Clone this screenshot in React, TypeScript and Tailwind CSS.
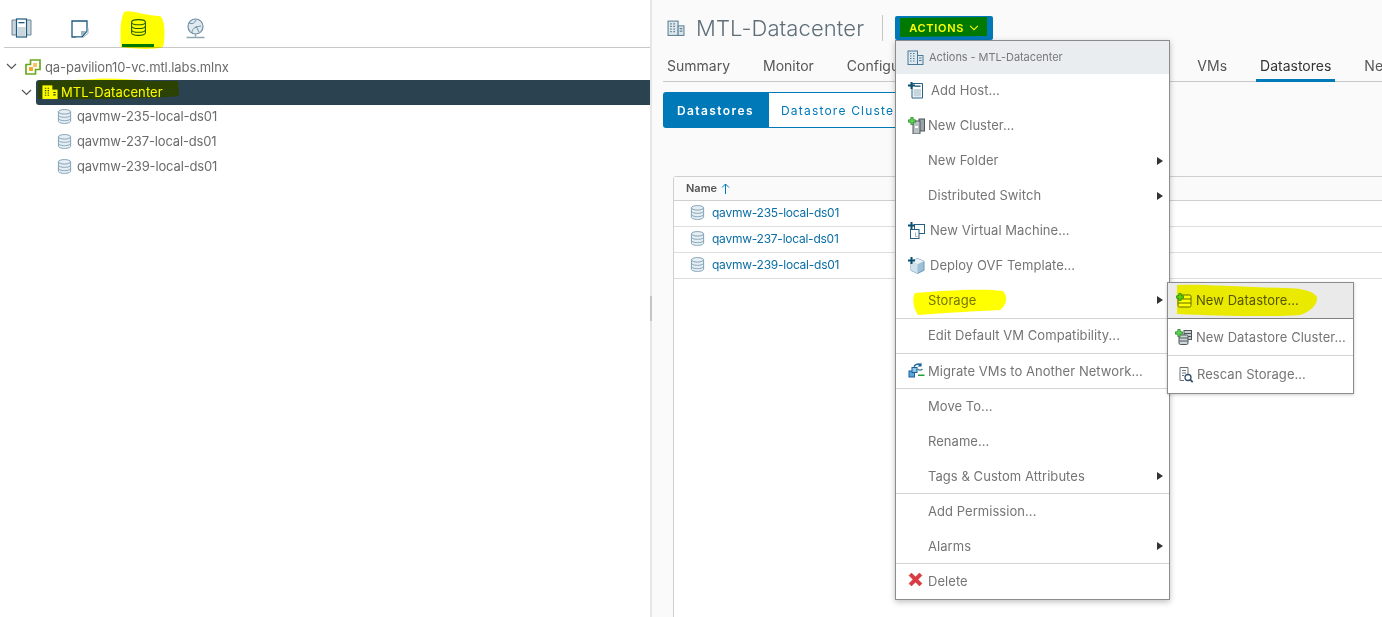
import React from "react";

const FONT = "font-['Inter','Liberation_Sans',sans-serif]";

function Chevron({ className = "", w = 11, h = 7 }: { className?: string; w?: number; h?: number }) {
  return (
    <svg width={w} height={h} viewBox="0 0 11 7" className={className} fill="none" stroke="currentColor" strokeWidth="1.2">
      <path d="M1 1l4.5 4.5L10 1" />
    </svg>
  );
}

function Db({ size = 15, stroke = "#7d9fb3", fill = "#e6eef3" }: { size?: number; stroke?: string; fill?: string }) {
  return (
    <svg width={size} height={size} viewBox="0 0 15 16" fill={fill} stroke={stroke} strokeWidth="1">
      <path d="M1 3v10c0 1.3 2.9 2.4 6.5 2.4S14 14.3 14 13V3" />
      <ellipse cx="7.5" cy="3" rx="6.5" ry="2.4" />
      <path d="M1 6.5c0 1.3 2.9 2.4 6.5 2.4S14 7.8 14 6.5M1 10c0 1.3 2.9 2.4 6.5 2.4S14 11.3 14 10" fill="none" />
    </svg>
  );
}

function Dc({ size = 16, c = "#4a7a96", fill = "#dfe9ef", win }: { size?: number; c?: string; fill?: string; win?: string }) {
  return (
    <svg width={size} height={size} viewBox="0 0 17 16" fill={fill} stroke={c} strokeWidth="1">
      <rect x="1" y="1.5" width="9.5" height="13.5" />
      <rect x="10.5" y="6" width="5.5" height="9" />
      <path
        d="M3 4h1.5M6 4h1.5M3 6.500h1.500M6 6.500h1.500M3 9h1.500M6 9h1.500M3 11.500h1.500M6 11.500h1.500M12 8.500h2.500M12 11h2.500"
        strokeWidth="1.200"
        stroke={win ?? c}
      />
    </svg>
  );
}

function Plus({ c = "#0b4f71", x = 0, y = 0 }: { c?: string; x?: number; y?: number }) {
  return <path d={`M${x + 3.5} ${y}v7M${x} ${y + 3.5}h7`} stroke={c} strokeWidth="2" fill="none" />;
}

function GreenPlus() {
  return (
    <path
      d="M2.800 .5h2.400v2.300h2.300v2.400H5.200v2.300H2.800V5.200H.5V2.800h2.300z"
      fill="#5fd35a"
      stroke="#2a8a2a"
      strokeWidth=".8"
    />
  );
}

function AddHost() {
  return (
    <svg width="16" height="17" viewBox="0 0 16 17">
      <path d="M4 1.500h10.500V16H4z" fill="#fff" stroke="#25607f" />
      <rect x="5.500" y="7" width="7.500" height="7.500" fill="#c6d6df" />
      <rect x="7" y="3.500" width="5.500" height="1.400" fill="#25607f" />
      <Plus x={0} y={0} />
    </svg>
  );
}

function NewCluster() {
  return (
    <svg width="17" height="17" viewBox="0 0 17 17">
      <rect x="11" y="2" width="5.500" height="12" fill="#9aa3a8" stroke="#4e565a" />
      <rect x="5" y="4" width="7" height="13" fill="#b9c0c4" stroke="#4e565a" />
      <rect x="7" y="9" width="3" height="2" fill="#fff" />
      <GreenPlus />
    </svg>
  );
}

function NewVm() {
  return (
    <svg width="17" height="17" viewBox="0 0 17 17" fill="none">
      <rect x="6.500" y="2.500" width="10" height="9" stroke="#25607f" fill="#fff" />
      <rect x="2.500" y="7.500" width="8.500" height="9" stroke="#25607f" fill="#fff" />
      <path d="M7.500 10.500v4h2" stroke="#9fb7c4" />
      <Plus x={0} y={0} />
    </svg>
  );
}

function Ovf() {
  return (
    <svg width="17" height="17" viewBox="0 0 17 17">
      <path d="M9.500 1.500l6.500 2.800v9L9.500 16.500 3 13.300v-9z" fill="#9cc1d6" stroke="#6d9ab3" />
      <path d="M3 4.300l6.500 3 6.500-3-6.500-2.800z" fill="#e7f0f5" />
      <path d="M3 4.300l6.500 3v9.200L3 13.300z" fill="#d2e2ec" />
      <Plus x={0} y={0} />
    </svg>
  );
}

function Migrate() {
  return (
    <svg width="17" height="16" viewBox="0 0 17 16">
      <rect x="1" y="9" width="5.500" height="6" fill="#5aa7dc" stroke="#1a5f9a" />
      <rect x="4" y="5.500" width="5" height="5" fill="#8fc6ea" stroke="#1a5f9a" />
      <path d="M6 4.500C7.500 2 10.500 1.500 13 3" stroke="#1a5f9a" strokeWidth="1.600" fill="none" />
      <path d="M13.500 .5v4h-4z" fill="#1a5f9a" />
      <path d="M9.500 7C11 8.500 13 8.500 14.500 7" stroke="#4a7a96" strokeWidth="1.400" fill="none" />
      <rect x="10" y="12.500" width="6.500" height="1.500" fill="#2a9a4a" />
    </svg>
  );
}

function NewDs() {
  return (
    <svg width="16" height="15" viewBox="0 0 16 15">
      <rect x="2" y="2" width="13" height="12" rx="1.500" fill="#fff" stroke="#5f6a1a" />
      <path d="M2 6h13M2 10h13" stroke="#5f6a1a" />
      <GreenPlus />
    </svg>
  );
}

function NewDsCluster() {
  return (
    <svg width="17" height="16" viewBox="0 0 17 16">
      <rect x="9" y="1.500" width="7.500" height="9" fill="#c6ced2" stroke="#4e565a" />
      <path d="M9 4.500h7.500M9 7.500h7.500" stroke="#4e565a" />
      <rect x="4" y="6" width="9" height="9.500" rx="1.500" fill="#cfd6da" stroke="#4e565a" />
      <path d="M4 9h9M4 12h9" stroke="#4e565a" />
      <GreenPlus />
    </svg>
  );
}

function Rescan() {
  return (
    <svg width="16" height="17" viewBox="0 0 16 17" fill="none">
      <path d="M2 1.500h8v7M6 14.500H2v-13" stroke="#6b7378" fill="#fff" />
      <path d="M4 4.500h4M4 7h4M4 9.500h2" stroke="#6b7378" />
      <circle cx="10" cy="11.500" r="3" stroke="#33506a" strokeWidth="1.300" />
      <path d="M12.200 13.700l2.500 2.500" stroke="#33506a" strokeWidth="1.800" />
    </svg>
  );
}

function DeleteX() {
  return (
    <svg width="15" height="15" viewBox="0 0 14 14">
      <path d="M1 3.300L3.300 1 7 4.700 10.700 1 13 3.300 9.300 7 13 10.700 10.700 13 7 9.300 3.300 13 1 10.700 4.700 7z" fill="#db3b42" stroke="#c0282f" strokeWidth=".5" />
    </svg>
  );
}

function Caret() {
  return <span className="w-0 h-0 border-y-[4px] border-y-transparent border-l-[6px] border-l-[#333]" />;
}

type Item = { label: string; icon?: React.ReactNode; sub?: boolean; sep?: boolean; pad?: string };

const items: Item[] = [
  { label: "Add Host...", icon: <AddHost />, pad: "pl-[35px]" },
  { label: "New Cluster...", icon: <NewCluster /> },
  { label: "New Folder", sub: true },
  { label: "Distributed Switch", sub: true },
  { label: "New Virtual Machine...", icon: <NewVm />, pad: "pl-[34px]" },
  { label: "Deploy OVF Template...", icon: <Ovf />, pad: "pl-[34px]" },
  { label: "Storage", sub: true, sep: true },
  { label: "Edit Default VM Compatibility...", sep: true },
  { label: "Migrate VMs to Another Network...", icon: <Migrate />, sep: true },
  { label: "Move To..." },
  { label: "Rename..." },
  { label: "Tags & Custom Attributes", sub: true, sep: true },
  { label: "Add Permission..." },
  { label: "Alarms", sub: true, sep: true },
  { label: "Delete", icon: <DeleteX /> },
];

function Menu() {
  return (
    <div className="absolute left-[895px] top-[40px] w-[275px] h-[560px] bg-white border border-[#8c8c8c] shadow-[0_2px_6px_rgba(0,0,0,0.25)] text-[13px] leading-none text-[#757575] tracking-[0.05px]">
      <div className="h-[33px] bg-[#e9edf0] flex items-center pl-[11px] gap-[5px] text-[11px] text-[#787878] tracking-[-0.07px]">
        <Dc size={17} />
        <span>Actions - MTL-Datacenter</span>
      </div>
      {items.map((it, i) => (
        <div
          key={it.label}
          className={`relative h-[35px] flex items-center pr-[6px] ${it.pad ?? "pl-[32px]"} ${it.sep ? "border-b border-[#d4d4d4]" : ""} ${i < 8 ? "pb-[2px]" : ""}`}
        >
          {it.icon ? <span className="absolute left-[12px] top-[8px] flex">{it.icon}</span> : null}
          <span className="flex-1">{it.label}</span>
          {it.sub ? <Caret /> : null}
        </div>
      ))}
    </div>
  );
}

function SubMenu() {
  return (
    <div className="absolute left-[1167px] top-[282px] w-[187px] h-[112px] bg-white border border-[#8c8c8c] shadow-[0_1px_3px_rgba(0,0,0,0.2)] text-[13px] leading-none text-[#757575] tracking-[0.05px] whitespace-nowrap">
      <div className="h-[36px] bg-[#eaeaea] border-b border-[#7f7f7f] flex items-center pl-[8px] gap-[4px] text-[#555]">
        <NewDs />
        <span>New Datastore...</span>
      </div>
      <div className="h-[37px] border-b border-[#d4d4d4] flex items-center pl-[7px] gap-[4px]">
        <NewDsCluster />
        <span>New Datastore Cluster...</span>
      </div>
      <div className="h-[37px] flex items-center pl-[10px] gap-[3px]">
        <Rescan />
        <span>Rescan Storage...</span>
      </div>
    </div>
  );
}

function Highlights() {
  return (
    <svg className="absolute left-0 top-0 mix-blend-multiply pointer-events-none" width="1382" height="617" viewBox="0 0 1382 617" fill="#ffff00">
      <path d="M124 12C130 9 146 16 160 16C166 20 165 40 163 47C155 50 130 49 121 47C120 35 120 20 124 12Z" />
      <path d="M38 81C60 80 85 80 95 79C110 78 130 79 146 81L178 81L179 96C150 99 60 100 38 99Z" />
      <path d="M900 18L987 17L987 36L900 37Z" />
      <path d="M915 293C940 291 980 288 1003 291C1008 297 1007 305 1000 310C975 311 945 313 918 315C913 308 912 298 915 293Z" />
      <path d="M1177 285C1200 284 1240 287 1285 288C1300 288 1314 291 1317 297C1318 305 1310 312 1300 315C1270 317 1220 316 1177 314Z" />
    </svg>
  );
}

function Book() {
  return (
    <svg width="21" height="21" viewBox="0 0 21 21" fill="none">
      <path d="M1 2h5v15H1zM15 2h5v15h-5z" fill="#c9d6dd" stroke="#6d8796" />
      <rect x="5.500" y="1" width="10" height="18" fill="#fff" stroke="#1d5a7b" strokeWidth="1.200" />
      <rect x="6.500" y="9" width="8" height="9" fill="#c9d6dd" />
      <rect x="7.500" y="4" width="6" height="1.300" fill="#1d5a7b" />
    </svg>
  );
}

function Note() {
  return (
    <svg width="18" height="18" viewBox="0 0 18 18" fill="none">
      <path d="M1 1h15v10l-5 6H1z" fill="#fff" stroke="#1d5a7b" strokeWidth="1.300" />
      <path d="M17 8v5.500L12 17.500H5" stroke="#9fb4c0" strokeWidth="1" fill="none" />
      <path d="M10 16v-5h6z" fill="#9fb4c0" />
    </svg>
  );
}

function Globe() {
  return (
    <svg width="19" height="21" viewBox="0 0 19 21" fill="none">
      <circle cx="9.500" cy="8.500" r="7.500" fill="#dfe9ef" stroke="#6d8fa3" strokeWidth="1.200" />
      <path d="M3 5c3 1 5 1 7-3M6 15c0-4 2-6 9-7M10 8l3 6" stroke="#6d8fa3" />
      <path d="M9.500 16v2.500M.5 19.500h18" stroke="#8ea5b2" strokeWidth="1.500" />
    </svg>
  );
}

const tree = ["qavmw-235-local-ds01", "qavmw-237-local-ds01", "qavmw-239-local-ds01"];

function Left() {
  return (
    <div className="w-[650px] shrink-0 h-full bg-white text-[13px] leading-none text-[#6b6b6b] tracking-[-0.1px]">
      <div className="ml-[4px] h-[48px] border-b border-[#c8c8c8] flex items-end">
        <div className="w-[21px] ml-[7px] h-[47px] pt-[18px]"><Book /></div>
        <div className="w-[18px] ml-[39px] h-[47px] pt-[20px]"><Note /></div>
        <div className="w-[32px] ml-[33px] h-[47px] flex items-start justify-center pt-[19px] border-b-[3px] border-[#0079b8]">
          <Db size={17} stroke="#1d5a7b" fill="#fff" />
        </div>
        <div className="w-[19px] ml-[32px] h-[47px] pt-[18px]"><Globe /></div>
      </div>
      <div className="h-[32px] pt-[12px] flex items-start">
        <span className="w-[12px] ml-[6px] mt-[3px] flex text-[#555]"><Chevron /></span>
        <span className="ml-[7px] -mt-[1px] flex">
          <svg width="16" height="16" viewBox="0 0 16 16" fill="none">
            <path d="M5.500 1h9.500v9.500h-4.500V15H1V5.500h4.500z" stroke="#6aa91c" strokeWidth="1.700" fill="#fff" />
            <rect x="4" y="8" width="4" height="4" fill="#f5a623" />
            <rect x="8" y="4" width="4" height="4" fill="#f5c463" />
          </svg>
        </span>
        <span className="ml-[4px] mt-[1px]">qa-pavilion10-vc.mtl.labs.mlnx</span>
      </div>
      <div className="ml-[36px] h-[25px] bg-[#2b4251] rounded-l-[3px] flex items-center relative text-white tracking-[0.1px] pb-[1px]">
        <span className="absolute -left-[15px] top-[9px] text-[#555] flex"><Chevron /></span>
        <span className="ml-[6px] flex"><Dc size={16} c="#fff" fill="#fff" win="#2b4251" /></span>
        <span className="ml-[3px]">MTL-Datacenter</span>
      </div>
      {tree.map((t) => (
        <div key={t} className="h-[25px] flex items-center pl-[57px] gap-[5px] pb-[2px] tracking-[-0.15px]">
          <Db />
          <span>{t}</span>
        </div>
      ))}
    </div>
  );
}

function Right() {
  return (
    <div className="flex-1 min-w-0 h-full bg-[#fafafa] pl-[11px] overflow-hidden">
      <div className="h-[41px] flex items-center pl-[4px] pt-[15px]">
        <Dc size={18} c="#5c8095" fill="#dde6eb" />
        <span className="ml-[11px] text-[22px] leading-none text-[#5f6f7a] font-light tracking-[0.1px]">MTL-Datacenter</span>
        <span className="ml-[18px] w-px h-[26px] bg-[#c8c8c8]" />
        <span className="ml-[12px] h-[24px] w-[98px] bg-[#0079b8] rounded-[2px] flex items-center justify-center gap-[5px] text-[11px] font-semibold tracking-[0.7px] text-white">
          ACTIONS
          <Chevron w={10} h={6} />
        </span>
      </div>
      <div className="h-[41px] w-[800px] border-b border-[#c8c8c8] flex items-end pl-[4px] gap-[33px] text-[14px] leading-none text-[#565656]">
        {["Summary", "Monitor", "Configure"].map((t) => (
          <span key={t} className="pb-[8px] shrink-0">{t}</span>
        ))}
        <span className="shrink-0 w-[219px]" />
        <span className="pb-[8px] shrink-0">VMs</span>
        <span className="border-b-[3px] -mb-px border-[#0079b8] text-[#333] pb-[6px] px-[4px] -mx-[4px] shrink-0">Datastores</span>
        <span className="pb-[8px] shrink-0">Networks</span>
      </div>
      <div className="mt-[10px] flex h-[36px] text-[12px] font-semibold tracking-[1.4px]">
        <span className="w-[105px] bg-[#0079b8] text-white rounded-l-[3px] flex items-center justify-center pt-[1px]">Datastores</span>
        <span className="w-[160px] bg-white border border-[#0079b8] text-[#0079b8] flex items-center pl-[12px] pt-[1px] font-normal tracking-[1.2px] whitespace-nowrap">Datastore Clusters</span>
      </div>
      <div className="mt-[48px] ml-[10px] w-[800px] h-[500px] bg-white border border-[#cfcfcf] rounded-tl-[3px] text-[12px] leading-none">
        <div className="h-[24px] bg-[#fafafa] border-b border-[#cfcfcf] flex items-center pl-[12px] gap-[4px] font-semibold text-[11px] text-[#555]">
          Name
          <svg width="9" height="11" viewBox="0 0 9 11" fill="none" stroke="#0079b8"><path d="M4.500 11V1M1 4.500L4.500 1 8 4.500" /></svg>
        </div>
        {tree.map((t) => (
          <div key={t} className="h-[26px] border-b border-[#dedede] flex items-center pl-[16px] gap-[7px] text-[#0a6ea5] tracking-[-0.25px] pb-[2px]">
            <Db />
            <span>{t}</span>
          </div>
        ))}
      </div>
    </div>
  );
}

export default function App() {
  return (
    <div className={`relative w-[1382px] h-[617px] overflow-hidden bg-white ${FONT}`}>
      <div className="flex h-full">
        <Left />
        <div className="w-[2px] shrink-0 bg-[#e6e6e6] flex items-center">
          <div className="w-[2px] h-[25px] bg-[#c4c4c4]" />
        </div>
        <Right />
      </div>
      <Menu />
      <SubMenu />
      <Highlights />
    </div>
  );
}
